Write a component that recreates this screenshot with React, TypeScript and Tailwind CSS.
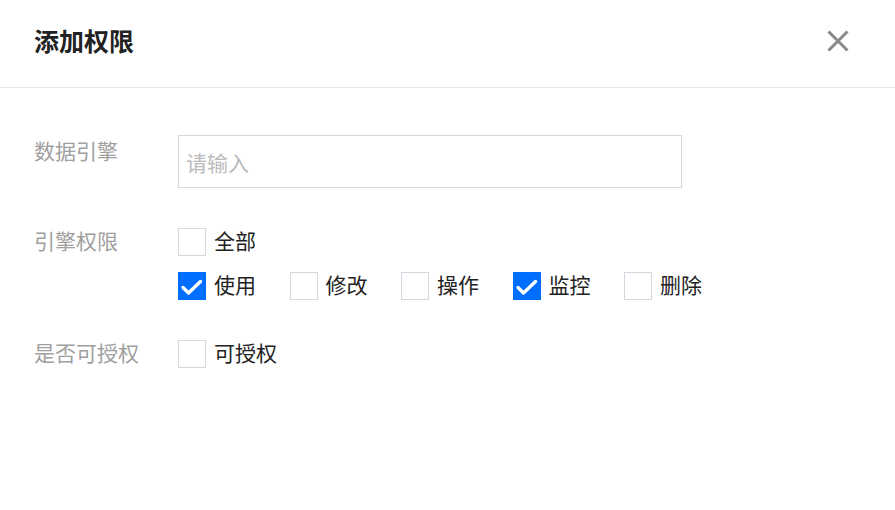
import React from "react";

const font = { fontFamily: '"Noto Sans CJK SC", "Noto Sans", sans-serif' };

function Checkbox({ label, checked }: { label: string; checked?: boolean }) {
  return (
    <label className="flex gap-2">
      <span
        className={
          checked
            ? "h-[28px] w-[28px] bg-[#006eff]"
            : "h-[28px] w-[28px] border border-[#d3d7e0] bg-white"
        }
      >
        {checked && (
          <svg width="28" height="28" viewBox="0 0 28 28" fill="none">
            <path
              d="M5 15.5 L10.5 21 L22.5 9.5"
              stroke="#fff"
              strokeWidth="3.4"
              strokeLinecap="round"
              strokeLinejoin="round"
            />
          </svg>
        )}
      </span>
      <span className="text-[21px] leading-[25px] text-[#222]">{label}</span>
    </label>
  );
}

export default function App() {
  const perms = [
    { label: "使用", checked: true },
    { label: "修改" },
    { label: "操作" },
    { label: "监控", checked: true },
    { label: "删除" },
  ];

  return (
    <div className="h-[510px] w-[895px] bg-white" style={font}>
      <div className="flex h-[88px] items-center justify-between border-b border-[#e6e6e6] pb-[6px] pl-[34px] pr-[46px]">
        <h2 className="text-[25px] font-bold leading-none text-[#222]">添加权限</h2>
        <button className="flex h-[22px] w-[22px] items-center justify-center">
          <svg width="22" height="22" viewBox="0 0 22 22">
            <path d="M1.5 1.5 L20.5 20.5 M20.5 1.5 L1.5 20.5" stroke="#888" strokeWidth="3" />
          </svg>
        </button>
      </div>

      <div className="flex flex-col gap-10 pl-[34px] pt-[47px]">
        <div className="flex">
          <div className="w-[144px] text-[21px] leading-[30px] text-[#a0a0a0]">数据引擎</div>
          <input
            placeholder="请输入"
            className="h-[53px] w-[504px] border border-[#d3d7e0] pl-[7px] pr-2 text-[21px] text-[#222] outline-none placeholder:text-[#bbbbbb]"
          />
        </div>

        <div className="flex">
          <div className="w-[144px] text-[21px] leading-[24px] text-[#a0a0a0]">引擎权限</div>
          <div className="flex flex-col gap-4">
            <div className="flex">
              <Checkbox label="全部" />
            </div>
            <div className="flex gap-x-[33.5px]">
              {perms.map((p) => (
                <Checkbox key={p.label} label={p.label} checked={p.checked} />
              ))}
            </div>
          </div>
        </div>

        <div className="flex">
          <div className="w-[144px] text-[21px] leading-[24px] text-[#a0a0a0]">是否可授权</div>
          <Checkbox label="可授权" />
        </div>
      </div>
    </div>
  );
}
